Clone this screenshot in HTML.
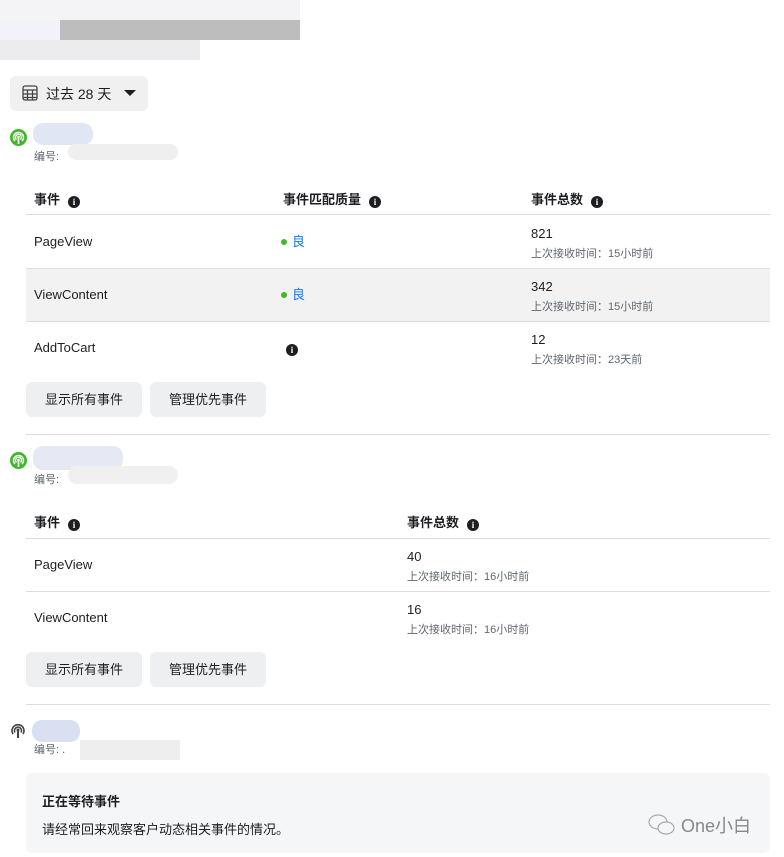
<!DOCTYPE html>
<html><head><meta charset="utf-8"><style>
*{margin:0;padding:0;box-sizing:border-box}
body{width:784px;height:857px;background:#fff;font-family:"Liberation Sans","Noto Sans CJK SC",sans-serif;color:#1c1e21;position:relative;overflow:hidden;font-size:13px}
.a{position:absolute;white-space:nowrap}
.blur{position:absolute;border-radius:10px}
.btn{position:absolute;height:35px;background:#eeeff1;border-radius:6px;font-size:13px;line-height:35px;text-align:center;color:#1c1e21}
.line{position:absolute;height:1px;background:#dadde1}
.sub{font-size:11px;color:#606770}
.hd{font-weight:bold;font-size:13px}
.i{display:inline-block;width:12px;height:12px;border-radius:50%;background:#1c1e21;color:#fff;font-size:9px;line-height:12px;text-align:center;font-weight:bold;vertical-align:-1px;margin-left:8px;font-family:"Liberation Serif",serif}
.dot{display:inline-block;width:6px;height:6px;border-radius:50%;background:#42b72a;margin-right:5px;vertical-align:1px}
.good{color:#1877f2}
</style></head><body>
<div class="blur" style="left:0;top:0;width:300px;height:20px;background:#f4f4f6;border-radius:0"></div>
<div class="blur" style="left:60px;top:20px;width:240px;height:20px;background:#bdbdbd;border-radius:0"></div>
<div class="blur" style="left:0;top:20px;width:60px;height:20px;background:#f2f3f8;border-radius:0"></div>
<div class="blur" style="left:0;top:40px;width:200px;height:20px;background:#ececee;border-radius:0"></div>

<div class="a" style="left:10px;top:76px;width:138px;height:35px;background:#f0f0f0;border-radius:6px"></div>
<svg class="a" style="left:22px;top:85px" width="16" height="16" viewBox="0 0 16 16" fill="none" stroke="#444" stroke-width="1.3"><rect x="1" y="1" width="14" height="14" rx="2"/><path d="M1 5h14M1 9h14M1 12.5h14M5.5 5v10M10.5 5v10"/></svg>
<div class="a" style="left:46px;top:84px;font-size:14px">过去 28 天</div>
<svg class="a" style="left:124px;top:89px" width="12" height="8"><path d="M0 1h12L6 7z" fill="#1c1e21"/></svg>

<svg class="a" style="left:10px;top:129px" width="17" height="17" viewBox="0 0 17 17"><circle cx="8.5" cy="8.5" r="8.5" fill="#42b72a"/><path d="M5 12a5 5 0 1 1 7 0M6.5 10.5a3 3 0 1 1 4 0" stroke="#fff" stroke-width="1.4" fill="none"/><circle cx="8.5" cy="8" r="1.3" fill="#fff"/><path d="M8.5 9v6" stroke="#fff" stroke-width="1.6"/></svg>
<div class="blur" style="left:33px;top:123px;width:60px;height:22px;background:#e1e6f4"></div>
<div class="a sub" style="left:34px;top:148px">编号:</div>
<div class="blur" style="left:68px;top:144px;width:110px;height:16px;background:#efefef"></div>

<div class="a hd" style="left:34px;top:189px">事件<span class="i">i</span></div>
<div class="a hd" style="left:283px;top:189px">事件匹配质量<span class="i">i</span></div>
<div class="a hd" style="left:531px;top:189px">事件总数<span class="i">i</span></div>
<div class="line" style="left:26px;top:214px;width:744px"></div>
<div class="a" style="left:34px;top:234px">PageView</div>
<div class="a" style="left:281px;top:231px"><span class="dot"></span><span class="good">良</span></div>
<div class="a" style="left:531px;top:226px">821</div>
<div class="a sub" style="left:531px;top:245px">上次接收时间：15小时前</div>
<div class="line" style="left:26px;top:268px;width:744px"></div>
<div class="a" style="left:26px;top:269px;width:744px;height:52px;background:#f2f2f2"></div>
<div class="a" style="left:34px;top:287px">ViewContent</div>
<div class="a" style="left:281px;top:284px"><span class="dot"></span><span class="good">良</span></div>
<div class="a" style="left:531px;top:279px">342</div>
<div class="a sub" style="left:531px;top:298px">上次接收时间：15小时前</div>
<div class="line" style="left:26px;top:321px;width:744px"></div>
<div class="a" style="left:34px;top:340px">AddToCart</div>
<div class="a" style="left:278px;top:340px"><span class="i">i</span></div>
<div class="a" style="left:531px;top:332px">12</div>
<div class="a sub" style="left:531px;top:351px">上次接收时间：23天前</div>
<div class="btn" style="left:26px;top:382px;width:116px">显示所有事件</div>
<div class="btn" style="left:150px;top:382px;width:116px">管理优先事件</div>
<div class="line" style="left:26px;top:434px;width:744px"></div>

<svg class="a" style="left:10px;top:452px" width="17" height="17" viewBox="0 0 17 17"><circle cx="8.5" cy="8.5" r="8.5" fill="#42b72a"/><path d="M5 12a5 5 0 1 1 7 0M6.5 10.5a3 3 0 1 1 4 0" stroke="#fff" stroke-width="1.4" fill="none"/><circle cx="8.5" cy="8" r="1.3" fill="#fff"/><path d="M8.5 9v6" stroke="#fff" stroke-width="1.6"/></svg>
<div class="blur" style="left:33px;top:446px;width:90px;height:24px;background:#e6e9f3"></div>
<div class="a sub" style="left:34px;top:471px">编号:</div>
<div class="blur" style="left:68px;top:466px;width:110px;height:18px;background:#f0f0f0"></div>
<div class="a hd" style="left:34px;top:512px">事件<span class="i">i</span></div>
<div class="a hd" style="left:407px;top:512px">事件总数<span class="i">i</span></div>
<div class="line" style="left:26px;top:538px;width:744px"></div>
<div class="a" style="left:34px;top:557px">PageView</div>
<div class="a" style="left:407px;top:549px">40</div>
<div class="a sub" style="left:407px;top:568px">上次接收时间：16小时前</div>
<div class="line" style="left:26px;top:591px;width:744px"></div>
<div class="a" style="left:34px;top:610px">ViewContent</div>
<div class="a" style="left:407px;top:602px">16</div>
<div class="a sub" style="left:407px;top:621px">上次接收时间：16小时前</div>
<div class="btn" style="left:26px;top:652px;width:116px">显示所有事件</div>
<div class="btn" style="left:150px;top:652px;width:116px">管理优先事件</div>
<div class="line" style="left:26px;top:704px;width:744px"></div>

<svg class="a" style="left:10px;top:722px" width="16" height="17" viewBox="0 0 16 17"><path d="M3 12a6 6 0 1 1 10 0M5 10.5a3.5 3.5 0 1 1 6 0" stroke="#444" stroke-width="1.6" fill="none"/><circle cx="8" cy="8" r="1.5" fill="#444"/><path d="M8 9v7" stroke="#444" stroke-width="2"/></svg>
<div class="blur" style="left:32px;top:720px;width:48px;height:22px;background:#d8e0f1"></div>
<div class="a sub" style="left:34px;top:741px">编号: .</div>
<div class="blur" style="left:80px;top:740px;width:100px;height:20px;background:#eeeeee;border-radius:0"></div>
<div class="a" style="left:26px;top:773px;width:744px;height:80px;background:#f5f6f7;border-radius:6px"></div>
<div class="a" style="left:42px;top:791px;font-weight:bold;font-size:13px">正在等待事件</div>
<div class="a" style="left:42px;top:819px;font-size:13px">请经常回来观察客户动态相关事件的情况。</div>
<div class="a" style="left:648px;top:812px;font-size:18px;color:#888">
<svg width="28" height="22" viewBox="0 0 28 22" style="vertical-align:-4px" fill="none" stroke="#aaa" stroke-width="1.2"><ellipse cx="10" cy="8" rx="9" ry="7"/><ellipse cx="18" cy="14" rx="8" ry="6" fill="#f5f6f7"/></svg> One小白</div>
</body></html>
